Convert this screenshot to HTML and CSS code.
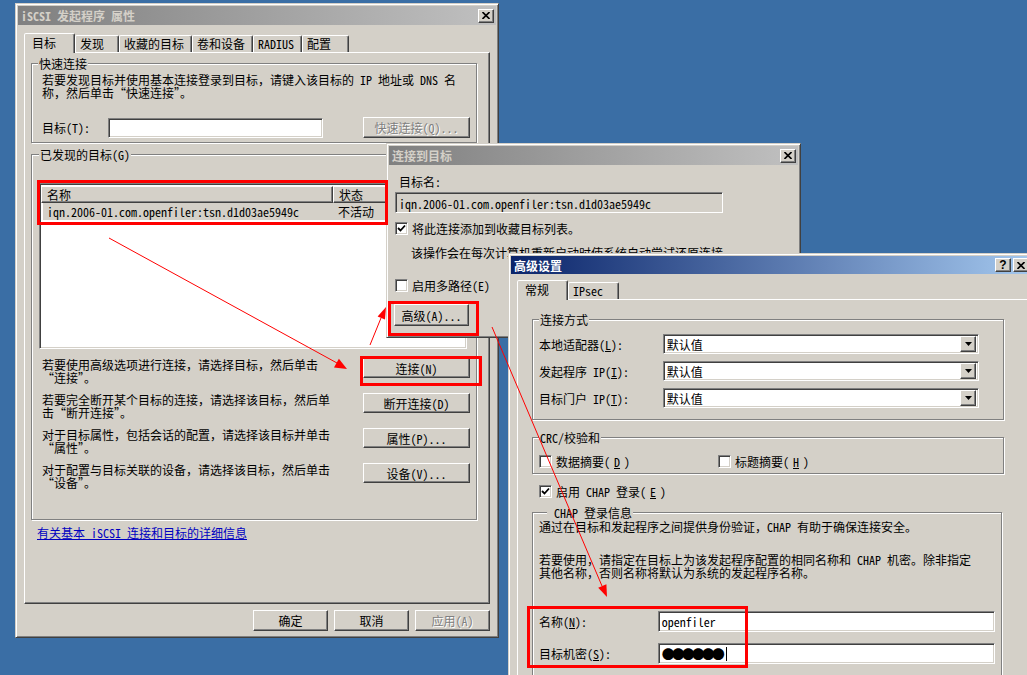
FILE: index.html
```html
<!DOCTYPE html>
<html lang="zh-CN">
<head>
  <meta charset="UTF-8" />
  <title>iSCSI 发起程序 属性</title>
  <link rel="stylesheet" href="styles.css">
</head>
<body>
<div class="desktop">

  <!-- main properties dialog -->
  <div class="window props">
    <div class="titlebar">
      <span class="title">iSCSI 发起程序 属性</span>
      <span class="cap-btn"><svg width="8" height="7" viewBox="0 0 8 7"><path d="M0.5 0 L7.5 7 M7.5 0 L0.5 7" stroke="#000" stroke-width="1.6"/></svg></span>
    </div>
    <div class="win-body">
      <div class="tabs">
        <span class="tab active" style="width:51px">目标</span>
        <span class="tab" style="width:44px">发现</span>
        <span class="tab" style="width:73px">收藏的目标</span>
        <span class="tab" style="width:61px">卷和设备</span>
        <span class="tab" style="width:49px">RADIUS</span>
        <span class="tab" style="width:47px">配置</span>
      </div>
      <div class="panel props-panel">
        <fieldset class="group quick">
          <legend>快速连接</legend>
          <p class="lines">若要发现目标并使用基本连接登录到目标，请键入该目标的 IP 地址或 DNS 名<br>称，然后单击“快速连接”。</p>
          <div class="field-row">
            <span class="lbl-target">目标(T):</span>
            <span class="edit target-edit"></span>
            <span class="btn disabled quick-btn">快速连接(Q)...</span>
          </div>
        </fieldset>

        <fieldset class="group found">
          <legend>已发现的目标(G)</legend>
          <div class="listview">
            <div class="lv-head"><span class="col-name">名称</span><span class="col-state">状态</span></div>
            <div class="lv-row"><span class="col-name">iqn.2006-01.com.openfiler:tsn.d1d03ae5949c</span><span class="col-state">不活动</span></div>
          </div>
          <div class="action-row">
            <p class="lines">若要使用高级选项进行连接，请选择目标，然后单击<br>“连接”。</p>
            <span class="btn action-btn">连接(N)</span>
          </div>
          <div class="action-row">
            <p class="lines">若要完全断开某个目标的连接，请选择该目标，然后单<br>击“断开连接”。</p>
            <span class="btn action-btn">断开连接(D)</span>
          </div>
          <div class="action-row">
            <p class="lines">对于目标属性，包括会话的配置，请选择该目标并单击<br>“属性”。</p>
            <span class="btn action-btn">属性(P)...</span>
          </div>
          <div class="action-row">
            <p class="lines">对于配置与目标关联的设备，请选择该目标，然后单击<br>“设备”。</p>
            <span class="btn action-btn">设备(V)...</span>
          </div>
        </fieldset>
        <a class="link" href="#">有关基本 iSCSI 连接和目标的详细信息</a>
      </div>
      <div class="dlg-buttons">
        <span class="btn dlg-btn">确定</span>
        <span class="btn dlg-btn">取消</span>
        <span class="btn dlg-btn disabled">应用(A)</span>
      </div>
    </div>
  </div>

  <!-- connect to target -->
  <div class="window connect">
    <div class="titlebar">
      <span class="title">连接到目标</span>
      <span class="cap-btn"><svg width="8" height="7" viewBox="0 0 8 7"><path d="M0.5 0 L7.5 7 M7.5 0 L0.5 7" stroke="#000" stroke-width="1.6"/></svg></span>
    </div>
    <div class="win-body connect-body">
      <div class="target-lbl">目标名:</div>
      <div class="edit readonly name-edit">iqn.2006-01.com.openfiler:tsn.d1d03ae5949c</div>
      <label class="check fav-check"><span class="box"><svg width="9" height="9" viewBox="0 0 9 9"><path d="M1 4 L3.5 6.5 L8 1.5" fill="none" stroke="#000" stroke-width="1.8"/></svg></span>将此连接添加到收藏目标列表。</label>
      <div class="note">该操作会在每次计算机重新启动时使系统自动尝试还原连接。</div>
      <label class="check multi-check"><span class="box"></span>启用多路径(E)</label>
      <span class="btn adv-btn">高级(A)...</span>
    </div>
  </div>

  <!-- advanced settings -->
  <div class="window advanced">
    <div class="titlebar active">
      <span class="title">高级设置</span>
      <span class="cap-btn help">?</span>
      <span class="cap-btn close-cut"><svg width="8" height="7" viewBox="0 0 8 7"><path d="M0.5 0 L7.5 7 M7.5 0 L0.5 7" stroke="#000" stroke-width="1.6"/></svg></span>
    </div>
    <div class="win-body adv-body">
      <div class="tabs">
        <span class="tab active" style="width:51px">常规</span>
        <span class="tab" style="width:51px">IPsec</span>
      </div>
      <div class="panel adv-panel">
        <fieldset class="group conn-method">
          <legend>连接方式</legend>
          <div class="combo-row">
            <span class="combo-lbl">本地适配器(<u>L</u>):</span>
            <span class="combo">默认值<span class="drop"><svg width="7" height="4" viewBox="0 0 7 4"><path d="M0 0 H7 L3.5 4 Z" fill="#000"/></svg></span></span>
          </div>
          <div class="combo-row">
            <span class="combo-lbl">发起程序 IP(<u>I</u>):</span>
            <span class="combo">默认值<span class="drop"><svg width="7" height="4" viewBox="0 0 7 4"><path d="M0 0 H7 L3.5 4 Z" fill="#000"/></svg></span></span>
          </div>
          <div class="combo-row">
            <span class="combo-lbl">目标门户 IP(<u>T</u>):</span>
            <span class="combo">默认值<span class="drop"><svg width="7" height="4" viewBox="0 0 7 4"><path d="M0 0 H7 L3.5 4 Z" fill="#000"/></svg></span></span>
          </div>
        </fieldset>

        <fieldset class="group crc">
          <legend>CRC/校验和</legend>
          <div class="crc-row">
            <label class="check digest"><span class="box"></span>数据摘要(<u>D</u>)</label>
            <label class="check"><span class="box"></span>标题摘要(<u>H</u>)</label>
          </div>
        </fieldset>

        <label class="check chap-check"><span class="box"><svg width="9" height="9" viewBox="0 0 9 9"><path d="M1 4 L3.5 6.5 L8 1.5" fill="none" stroke="#000" stroke-width="1.8"/></svg></span>启用 CHAP 登录(<u>E</u>)</label>

        <fieldset class="group chap">
          <legend class="chap-legend"> CHAP 登录信息</legend>
          <p class="lines chap-intro">通过在目标和发起程序之间提供身份验证，CHAP 有助于确保连接安全。</p>
          <p class="lines chap-help">若要使用，请指定在目标上为该发起程序配置的相同名称和 CHAP 机密。除非指定<br>其他名称，否则名称将默认为系统的发起程序名称。</p>
          <div class="cred-row name-row">
            <span class="cred-lbl">名称(<u>N</u>):</span>
            <span class="edit cred-edit">openfiler</span>
          </div>
          <div class="cred-row secret-row">
            <span class="cred-lbl">目标机密(<u>S</u>):</span>
            <span class="edit cred-edit"><span class="dots">●●●●●●</span><span class="caret"></span></span>
          </div>
        </fieldset>
      </div>
    </div>
  </div>

  <!-- red annotations drawn on top of the screenshot -->
  <svg class="marks" width="1027" height="675" viewBox="0 0 1027 675">
    <g fill="none" stroke="#ff0000" stroke-width="3">
      <rect x="38.5" y="181.5" width="348" height="42"/>
      <rect x="361.5" y="357.5" width="119" height="27"/>
      <rect x="389.5" y="302.5" width="88" height="32"/>
      <rect x="528.5" y="607.5" width="218" height="59"/>
    </g>
    <g stroke="#ff0000" stroke-width="1">
      <line x1="109" y1="238" x2="337" y2="363"/>
      <line x1="370" y1="345" x2="381" y2="318"/>
      <line x1="492" y1="327" x2="602" y2="586"/>
    </g>
    <g fill="#ff0000">
      <polygon points="347,369 334,367.6 338.9,358.8"/>
      <polygon points="386,307 385,319.6 377.6,316.5"/>
      <polygon points="607,597 598.2,587.7 606.4,584.2"/>
    </g>
  </svg>
</div>
</body>
</html>
```

FILE: styles.css
```css
* {
  box-sizing: border-box;
}
body {
  margin: 0;
  background: #3a6ea5;
  font-family: "Noto Sans Mono CJK SC", "Noto Sans CJK SC", "Liberation Mono", monospace;
  font-size: 12px;
  line-height: 13px;
  color: #000;
}
p {
  margin: 0;
}
.desktop {
  position: relative;
  width: 1027px;
  height: 675px;
  overflow: hidden;
}

/* window frame */
.window {
  position: absolute;
  display: flex;
  flex-direction: column;
  background: #d4d0c8;
  border: 1px solid;
  border-color: #d4d0c8 #404040 #404040 #d4d0c8;
  box-shadow: inset 1px 1px #fff, inset -1px -1px #808080;
  padding: 2px;
}
.props {
  left: 15px;
  top: 3px;
  width: 484px;
  height: 635px;
}
.connect {
  left: 386px;
  top: 143px;
  width: 415px;
  height: 195px;
}
.advanced {
  left: 508px;
  top: 253px;
  width: 536px;
  height: 440px;
}

.titlebar {
  height: 19px;
  flex: none;
  display: flex;
  align-items: center;
  padding: 0 2px 0 3px;
  font-weight: bold;
  color: #d4d0c8;
  background: linear-gradient(to right, #808080, #c0c0c0);
}
.titlebar.active {
  height: 18px;
  color: #fff;
  background: linear-gradient(to right, #0a246a, #a6caf0);
}
.title {
  flex: 1;
  white-space: nowrap;
}
.cap-btn {
  width: 16px;
  height: 14px;
  flex: none;
  display: flex;
  align-items: center;
  justify-content: center;
  margin-left: 2px;
  background: #d4d0c8;
  border: 1px solid;
  border-color: #fff #404040 #404040 #fff;
  box-shadow: inset -1px -1px #808080;
  color: #000;
  font-family: "Liberation Sans", sans-serif;
  font-size: 12px;
  font-weight: bold;
}
.close-cut {
  margin-right: 10px;
}

.win-body {
  flex: 1;
  display: flex;
  flex-direction: column;
  padding: 8px 6px 0 6px;
}

/* tabs */
.tabs {
  display: flex;
  align-items: flex-end;
  height: 19px;
  flex: none;
  position: relative;
  z-index: 1;
}
.tab {
  height: 17px;
  padding-left: 4px;
  border: 1px solid;
  border-bottom: none;
  border-color: #fff #404040 transparent #fff;
  box-shadow: inset -1px 0 #808080;
  border-radius: 2px 2px 0 0;
  line-height: 15px;
  white-space: nowrap;
}
.tab.active {
  height: 20px;
  margin-bottom: -1px;
  padding-left: 7px;
  line-height: 17px;
  background: #d4d0c8;
}
.panel {
  border: 1px solid;
  border-color: #fff #404040 #404040 #fff;
  box-shadow: inset -1px -1px #808080;
}

/* group boxes */
.group {
  margin: 0;
  min-inline-size: 0;
  border: 1px solid #808080;
  box-shadow: inset 1px 1px #fff, 1px 1px #fff;
}
.group legend {
  padding: 0 1px;
  background: #d4d0c8;
  line-height: 13px;
}
.lines {
  white-space: nowrap;
}

/* controls */
.edit {
  display: block;
  height: 21px;
  background: #fff;
  border: 1px solid;
  border-color: #808080 #fff #fff #808080;
  box-shadow: inset 1px 1px #404040, inset -1px -1px #d4d0c8;
  padding: 4px 3px 0;
  white-space: nowrap;
  overflow: hidden;
}
.edit.readonly {
  background: #d4d0c8;
}
.btn {
  display: flex;
  align-items: center;
  justify-content: center;
  height: 21px;
  background: #d4d0c8;
  border: 1px solid;
  border-color: #fff #404040 #404040 #fff;
  box-shadow: inset -1px -1px #808080;
  white-space: nowrap;
}
.btn.disabled {
  color: #808080;
  text-shadow: 1px 1px #fff;
}
.check {
  display: flex;
  align-items: center;
  gap: 4px;
  height: 13px;
  white-space: nowrap;
}
.box {
  width: 13px;
  height: 13px;
  flex: none;
  display: flex;
  align-items: center;
  justify-content: center;
  background: #fff;
  border: 1px solid;
  border-color: #808080 #fff #fff #808080;
  box-shadow: inset 1px 1px #404040, inset -1px -1px #d4d0c8;
}

/* properties dialog */
.props-panel {
  height: 552px;
  flex: none;
  display: flex;
  flex-direction: column;
  padding: 0 12px 0 6px;
}
.quick {
  margin-top: 4px;
  padding: 0 6px 4px 10px;
}
.quick legend {
  margin-left: -4px;
}
.quick .lines {
  margin-top: 3px;
}
.field-row {
  display: flex;
  align-items: center;
  margin-top: 18px;
  height: 21px;
}
.lbl-target {
  width: 66px;
}
.target-edit {
  width: 215px;
  height: 20px;
}
.quick-btn {
  width: 107px;
  margin-left: auto;
}
.found {
  margin-top: 5px;
  padding: 0 6px 30px 7px;
}
.listview {
  margin: 22px 3px 0 0;
  height: 166px;
  background: #fff;
  border: 1px solid;
  border-color: #808080 #fff #fff #808080;
  box-shadow: inset 1px 1px #404040, inset -1px -1px #d4d0c8;
  padding: 2px 1px 0 1px;
  overflow: hidden;
}
.lv-head {
  display: flex;
  height: 17px;
}
.lv-head span {
  background: #d4d0c8;
  border: 1px solid;
  border-color: #fff #404040 #404040 #fff;
  box-shadow: inset -1px -1px #808080;
  padding: 1px 5px 0;
}
.col-name {
  width: 292px;
}
.col-state {
  flex: 1;
}
.lv-row {
  display: flex;
  margin: 0 0 0 2px;
  height: 17px;
  padding-top: 2px;
  background: #d4d0c8;
}
.lv-row .col-name {
  width: 290px;
  padding-left: 4px;
}
.lv-row .col-state {
  padding-left: 5px;
}
.action-row {
  display: flex;
  justify-content: space-between;
  align-items: flex-start;
  height: 26px;
  margin-top: 9px;
}
.action-row .lines {
  padding-left: 3px;
}
.action-btn {
  width: 107px;
  height: 20px;
}
.link {
  align-self: flex-start;
  display: block;
  margin: 6px 0 0 6px;
  color: #0000c0;
  text-decoration: underline;
}
.dlg-buttons {
  display: flex;
  justify-content: flex-end;
  gap: 6px;
  margin-top: 6px;
}
.dlg-btn {
  width: 75px;
}

/* connect dialog */
.connect-body {
  padding: 10px 6px 0;
  align-items: flex-start;
}
.target-lbl {
  margin-left: 4px;
}
.name-edit {
  width: 328px;
  margin-top: 4px;
}
.fav-check {
  margin-top: 9px;
}
.note {
  margin: 11px 0 0 16px;
  white-space: nowrap;
}
.multi-check {
  margin-top: 20px;
}
.adv-btn {
  width: 75px;
  height: 22px;
  margin: 12px 0 0 -1px;
}

/* advanced dialog */
.adv-body {
  padding: 6px 6px 0;
}
.adv-panel {
  flex: 1;
  padding: 0 0 0 14px;
}
.conn-method {
  width: 472px;
  margin-top: 13px;
  padding: 0 24px 11px 6px;
}
.combo-row {
  display: flex;
  align-items: center;
  height: 20px;
  margin-top: 7px;
}
.conn-method legend + .combo-row {
  margin-top: 8px;
}
.combo-lbl {
  width: 124px;
  white-space: nowrap;
}
.combo {
  display: flex;
  align-items: center;
  width: 317px;
  height: 20px;
  padding: 0 2px 0 3px;
  background: #fff;
  border: 1px solid;
  border-color: #808080 #fff #fff #808080;
  box-shadow: inset 1px 1px #404040, inset -1px -1px #d4d0c8;
}
.drop {
  margin-left: auto;
  width: 16px;
  height: 16px;
  display: flex;
  align-items: center;
  justify-content: center;
  background: #d4d0c8;
  border: 1px solid;
  border-color: #fff #404040 #404040 #fff;
  box-shadow: inset -1px -1px #808080;
}
.crc {
  width: 472px;
  margin-top: 11px;
  padding: 0 6px 5px 6px;
}
.crc-row {
  display: flex;
  margin-top: 11px;
}
.digest {
  width: 179px;
}
.chap-check {
  margin: 11px 0 0 7px;
}
.chap {
  width: 470px;
  margin-top: 8px;
  padding: 0 6px 20px 6px;
}
.chap-legend {
  margin-left: 8px;
  white-space: pre;
}
.chap-intro {
  margin-top: 1px;
}
.chap-help {
  margin-top: 20px;
}
.cred-row {
  display: flex;
  align-items: center;
  height: 21px;
}
.name-row {
  margin-top: 32px;
}
.secret-row {
  margin-top: 11px;
}
.cred-lbl {
  width: 119px;
}
.cred-edit {
  width: 338px;
  display: flex;
  align-items: center;
  padding-top: 0;
}
.dots {
  letter-spacing: -3px;
  font-size: 13px;
}
.caret {
  display: inline-block;
  width: 1px;
  height: 14px;
  margin-left: 4px;
  background: #000;
}

/* annotation layer */
.marks {
  position: absolute;
  left: 0;
  top: 0;
  pointer-events: none;
}
```
